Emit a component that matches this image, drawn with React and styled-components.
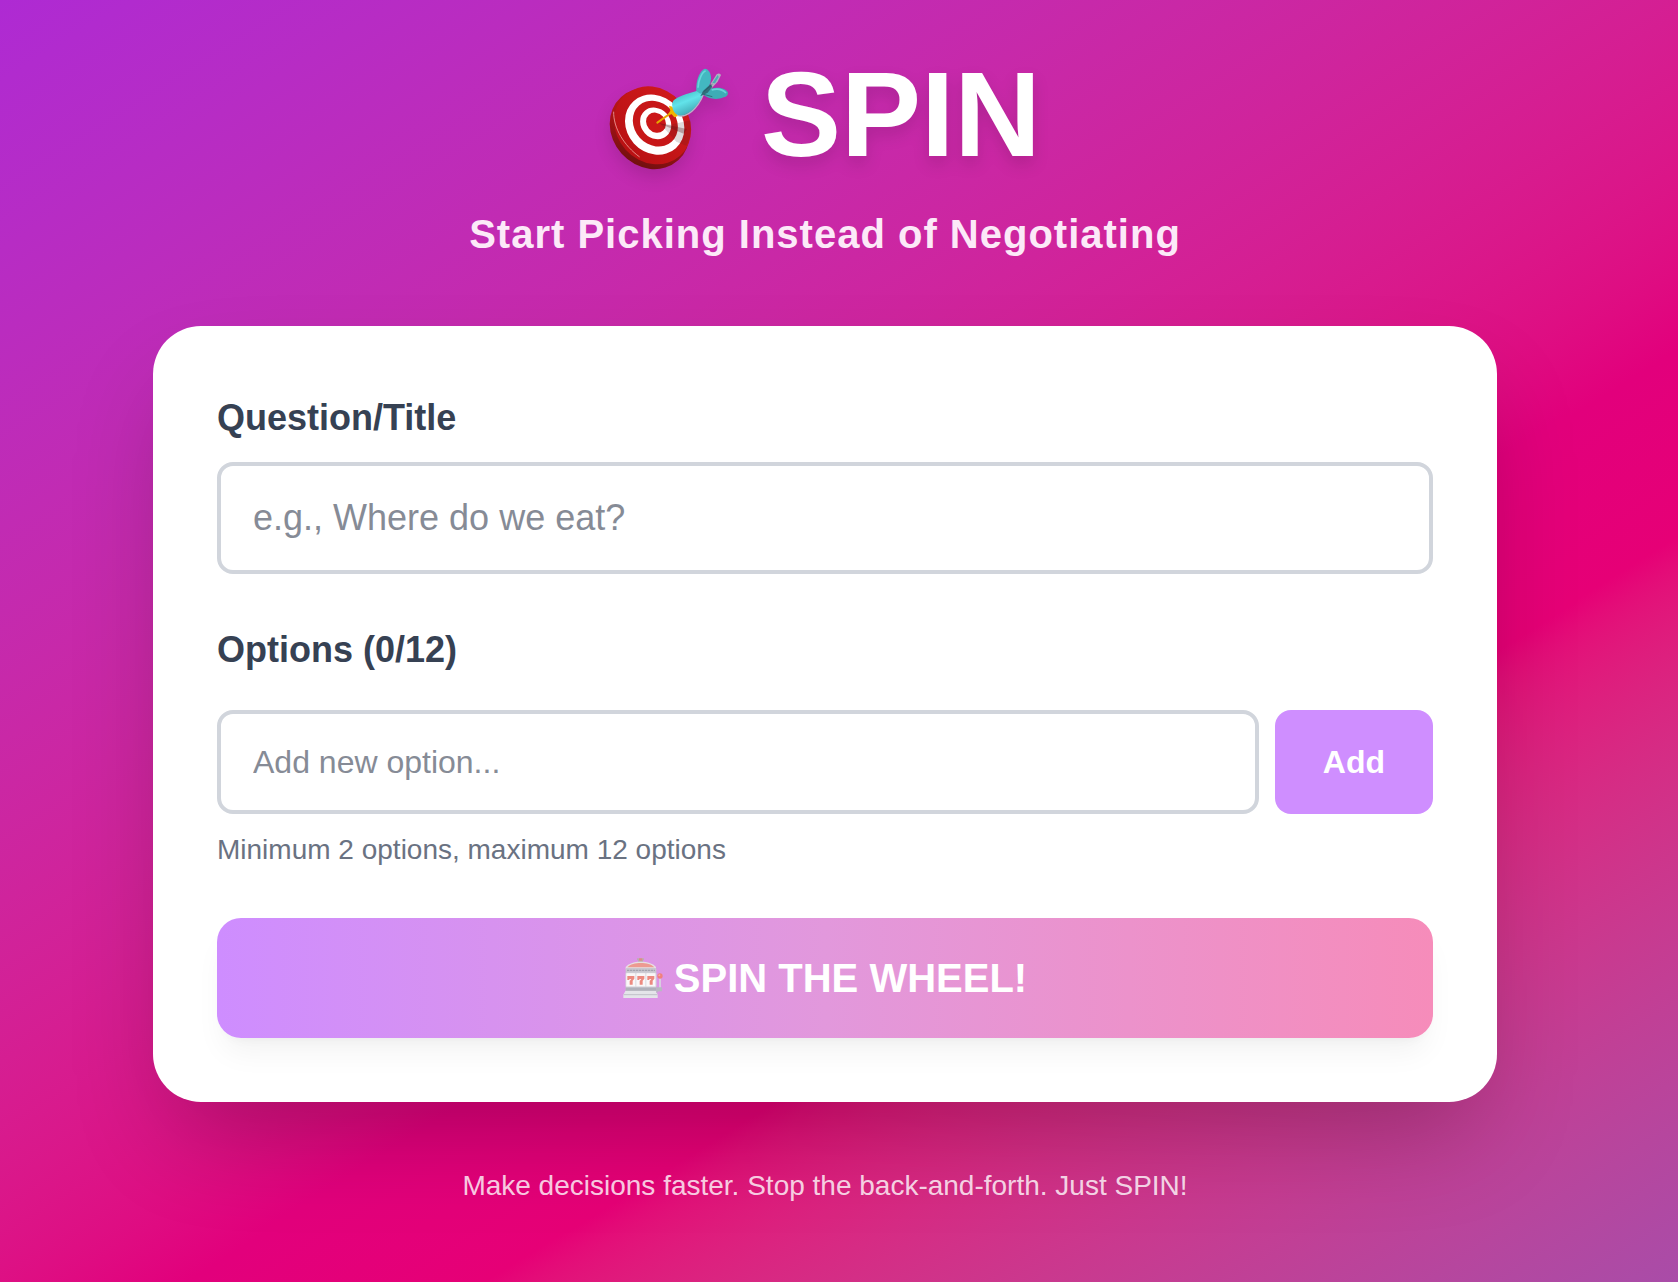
import React, { useState } from "react";
import styled, { createGlobalStyle } from "styled-components";

const MIN_OPTIONS = 2;
const MAX_OPTIONS = 12;

const GlobalStyles = createGlobalStyle`
  *, *::before, *::after {
    box-sizing: border-box;
  }
  body {
    margin: 0;
    font-family: "Liberation Sans", Arial, sans-serif;
  }
  button, input {
    font-family: inherit;
  }
`;

const PageStyles = styled.div`
  min-height: 100vh;
  padding: 54px 60px 64px 32px;
  background: linear-gradient(148deg in oklab, #ae2ad3, #e2007c 60%, #e60076 68%, #a94ca8);
`;

const Container = styled.div`
  max-width: 1344px;
  margin: 0 auto;
`;

const Header = styled.header`
  margin-bottom: 64px;
  text-align: center;
`;

const Title = styled.h1`
  display: flex;
  justify-content: center;
  align-items: center;
  gap: 32px;
  margin: 0 0 32px;
  font-size: 120px;
  line-height: 120px;
  font-weight: 700;
  color: #fff;
  filter: drop-shadow(0 8px 8px rgba(0, 0, 0, 0.12));
  svg {
    width: 120px;
    height: 102px;
    margin-top: 10px;
  }
`;

const Subtitle = styled.p`
  margin: 0;
  font-size: 40px;
  line-height: 56px;
  font-weight: 700;
  letter-spacing: 1px;
  color: #fce9f8;
`;

const Card = styled.main`
  padding: 64px;
  border-radius: 48px;
  background-color: #fff;
  box-shadow: 0 50px 100px -24px rgba(0, 0, 0, 0.25);
`;

const Field = styled.div`
  margin-bottom: 48px;
`;

const Label = styled.label`
  display: block;
  margin-bottom: ${props => props.$gap || "16px"};
  font-size: 36px;
  line-height: 56px;
  font-weight: 700;
  color: #364153;
`;

const Input = styled.input`
  display: block;
  width: 100%;
  min-width: 0;
  padding: 24px 32px;
  border: 4px solid #d1d5dc;
  border-radius: 16px;
  outline: none;
  background-color: #fff;
  font-size: ${props => (props.$large ? "36px" : "32px")};
  line-height: ${props => (props.$large ? "56px" : "48px")};
  height: ${props => (props.$large ? "112px" : "104px")};
  color: #1e2939;
  &::placeholder {
    color: #868b96;
    opacity: 1;
  }
  &:focus {
    border-color: #ad46ff;
  }
`;

const OptionRow = styled.form`
  display: flex;
  gap: 16px;
`;

const OptionList = styled.ul`
  margin: 0 0 24px;
  padding: 0;
  list-style: none;
  font-size: 32px;
  line-height: 48px;
  color: #364153;
`;

const AddButton = styled.button`
  padding: 0 48px;
  border: 0;
  border-radius: 16px;
  background-color: #cf8eff;
  font-size: 32px;
  line-height: 48px;
  font-weight: 700;
  color: #fff;
`;

const Hint = styled.p`
  margin: 16px 0 0;
  font-size: 28px;
  line-height: 40px;
  color: #6a7282;
`;

const SpinButton = styled.button`
  display: flex;
  justify-content: center;
  align-items: center;
  gap: 11px;
  width: 100%;
  padding: 32px;
  border: 0;
  border-radius: 24px;
  background: linear-gradient(90deg, #ce8dff, #e298dc 50%, #f68cba);
  box-shadow: 0 20px 30px -6px rgba(0, 0, 0, 0.05), 0 8px 12px -8px rgba(0, 0, 0, 0.05);
  font-size: 40px;
  line-height: 56px;
  font-weight: 700;
  color: #fff;
  svg {
    width: 40px;
    height: 40px;
  }
`;

const Footer = styled.footer`
  margin-top: 64px;
  font-size: 28px;
  line-height: 40px;
  text-align: center;
  color: rgba(255, 255, 255, 0.8);
`;

const TargetIcon = () => (
  <svg viewBox="56 56 360 304" aria-hidden="true">
    <defs>
      <linearGradient id="rim" x1="0" y1="0" x2="0.6" y2="1">
        <stop offset="0" stopColor="#c81a1c" />
        <stop offset="0.55" stopColor="#b01416" />
        <stop offset="1" stopColor="#74100f" />
      </linearGradient>
      <linearGradient id="face" x1="0" y1="0" x2="0" y2="1">
        <stop offset="0" stopColor="#cf1a1b" />
        <stop offset="1" stopColor="#b91113" />
      </linearGradient>
      <linearGradient id="barrel" x1="0.2" y1="0" x2="0.7" y2="1">
        <stop offset="0" stopColor="#3fb4bc" />
        <stop offset="0.45" stopColor="#62e3ea" />
        <stop offset="1" stopColor="#3a9ca8" />
      </linearGradient>
    </defs>
    <ellipse cx="178" cy="237" rx="128" ry="113" transform="rotate(48 178 237)" fill="url(#rim)" />
    <ellipse cx="187" cy="227" rx="123" ry="109" transform="rotate(48 187 227)" fill="url(#face)" />
    <path d="M70 186C69 235 101 288 148 322" fill="none" stroke="#e58a86" strokeWidth="3" />
    <ellipse cx="193" cy="225" rx="95" ry="84" transform="rotate(48 193 225)" fill="#fff" />
    <ellipse cx="195" cy="222" rx="73" ry="63" transform="rotate(48 195 222)" fill="#c71718" />
    <ellipse cx="196" cy="221" rx="50" ry="44" transform="rotate(48 196 221)" fill="#fff" />
    <ellipse cx="197" cy="219" rx="32" ry="28" transform="rotate(48 197 219)" fill="#cb1718" />
    <path d="M208 221L240 225L300 212C305 240 302 266 288 288L258 276Z" fill="#3c2022" opacity="0.16" />
    <path d="M204 220L290 238L280 252Z" fill="#571013" opacity="0.3" />
    <path d="M201 219L242 190" stroke="#e6a700" strokeWidth="6" strokeLinecap="round" />
    <path d="M236 168L246 171L263 199L252 203L244 194L233 194L240 183Z" fill="#f0b400" />
    <path d="M262 197C288 206 322 176 338 136" fill="none" stroke="#bcb0c6" strokeWidth="5" />
    <path d="M362 101L379 74Q388 68 392 76L382 96L356 124Z" fill="#aeb0bf" />
    <path d="M366 100L382 76L385 82L374 101Z" fill="#48aeb7" />
    <path d="M246 171C242 150 258 145 286 134L326 122L338 134C328 159 308 187 283 195C264 202 249 192 246 171Z" fill="url(#barrel)" />
    <path d="M318 124C316 100 324 72 338 60Q348 52 357 66C368 86 360 109 344 126L330 132Z" fill="#43b8c1" />
    <path d="M323 114C324 90 336 66 346 64" fill="none" stroke="#66d6db" strokeWidth="5" />
    <path d="M338 134L364 116C384 111 408 116 413 129Q414 139 400 143C380 152 352 148 338 134Z" fill="#3eacb6" />
    <path d="M364 121C380 116 397 120 407 130" fill="none" stroke="#68d4d9" strokeWidth="5" />
    <path d="M330 140L338 124L360 104L366 111L352 129Z" fill="#2f6f7a" />
    <path d="M340 126L366 104M340 134L366 141" stroke="#27525d" strokeWidth="2" />
  </svg>
);

const SlotIcon = () => (
  <svg viewBox="69 50 120 120" aria-hidden="true">
    <path d="M111 51H132V57H129V63H114V57H111Z" fill="#b9aeb4" />
    <path d="M117 51H127V58H117Z" fill="#df8c83" />
    <path d="M77 84V77C84 67 102 61 122 61C143 61 161 67 168 77V84Z" fill="#e6dfe3" />
    <path d="M82 78C91 68 106 65 122 65C139 65 154 68 163 78Z" fill="#ed9a91" />
    <rect x="77" y="80" width="92" height="72" rx="4" fill="#c9c7cf" />
    <path d="M81 87H165" stroke="#a3a4ae" strokeWidth="4" strokeDasharray="7 2" />
    <rect x="77" y="94" width="92" height="43" rx="3" fill="#dcdce2" />
    <rect x="79" y="96" width="27" height="39" rx="2" fill="#faf7f8" />
    <rect x="109" y="96" width="27" height="39" rx="2" fill="#faf7f8" />
    <rect x="139" y="96" width="27" height="39" rx="2" fill="#faf7f8" />
    {[0, 30, 60].map(x => (
      <path
        key={x}
        transform={`translate(${x} 0)`}
        d="M82 104H103V112L98 118V130H89V119L94 113H88V116H82Z"
        fill="#ec8a80"
      />
    ))}
    <path d="M77 139H169V148H77Z" fill="#b0b1ba" />
    <path d="M76 149H168L173 160V170H70V160Z" fill="#e4e4e9" />
    <path d="M71 160H172" stroke="#c0c0c9" strokeWidth="3" />
    <path d="M180 106V142" stroke="#d9d7e0" strokeWidth="5" />
    <path d="M169 138H186V150H176L169 156Z" fill="#b8b8c2" />
    <circle cx="180" cy="104" r="8" fill="#f0807e" />
    <circle cx="178" cy="102" r="3" fill="#f7aaa6" />
  </svg>
);

const App = () => {
  const [title, setTitle] = useState("");
  const [option, setOption] = useState("");
  const [options, setOptions] = useState([]);

  const handleAddOption = e => {
    e.preventDefault();
    const value = option.trim();
    if (!value || options.length >= MAX_OPTIONS) return;
    setOptions([...options, value]);
    setOption("");
  };

  return (
    <PageStyles>
      <GlobalStyles />
      <Container>
        <Header>
          <Title>
            <TargetIcon />
            <span>SPIN</span>
          </Title>
          <Subtitle>Start Picking Instead of Negotiating</Subtitle>
        </Header>
        <Card>
          <Field>
            <Label htmlFor="title">Question/Title</Label>
            <Input
              $large
              id="title"
              type="text"
              placeholder="e.g., Where do we eat?"
              value={title}
              onChange={e => setTitle(e.target.value)}
            />
          </Field>
          <Field>
            <Label htmlFor="option" $gap="32px">
              Options ({options.length}/{MAX_OPTIONS})
            </Label>
            {options.length > 0 && (
              <OptionList>
                {options.map((item, index) => (
                  <li key={index}>{item}</li>
                ))}
              </OptionList>
            )}
            <OptionRow onSubmit={handleAddOption}>
              <Input
                id="option"
                type="text"
                placeholder="Add new option..."
                value={option}
                onChange={e => setOption(e.target.value)}
              />
              <AddButton type="submit" disabled={!option.trim()}>Add</AddButton>
            </OptionRow>
            <Hint>Minimum {MIN_OPTIONS} options, maximum {MAX_OPTIONS} options</Hint>
          </Field>
          <SpinButton type="button" disabled={options.length < MIN_OPTIONS}>
            <SlotIcon />
            <span>SPIN THE WHEEL!</span>
          </SpinButton>
        </Card>
        <Footer>Make decisions faster. Stop the back-and-forth. Just SPIN!</Footer>
      </Container>
    </PageStyles>
  );
};

export default App;
